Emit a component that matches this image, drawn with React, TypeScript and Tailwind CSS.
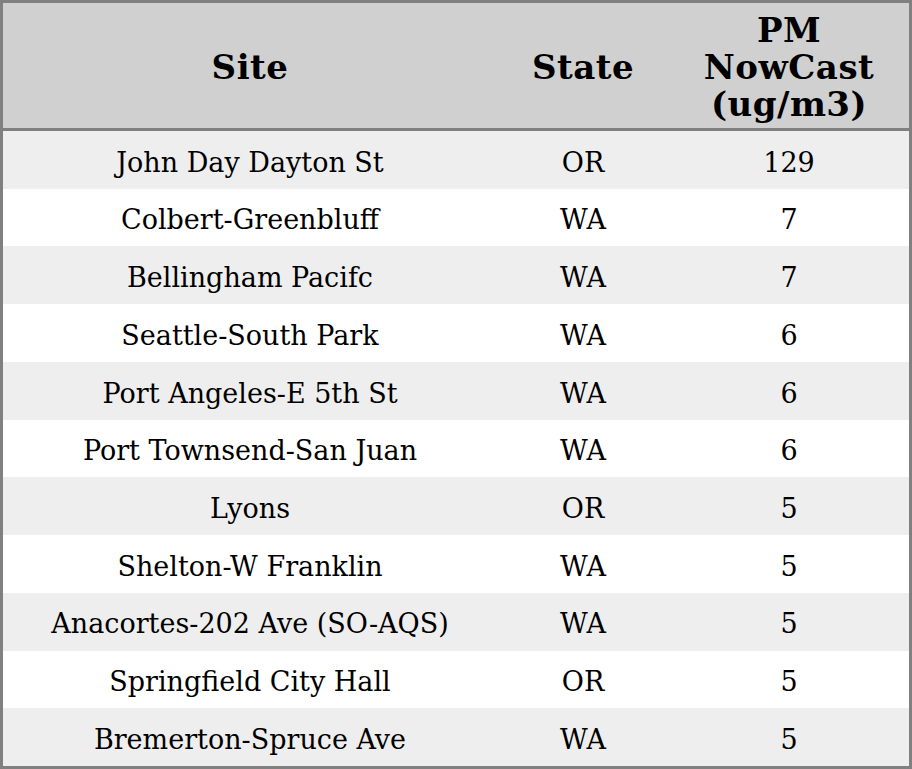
import React from "react";

const rows: [string, string, string][] = [
  ["John Day Dayton St", "OR", "129"],
  ["Colbert-Greenbluff", "WA", "7"],
  ["Bellingham Pacifc", "WA", "7"],
  ["Seattle-South Park", "WA", "6"],
  ["Port Angeles-E 5th St", "WA", "6"],
  ["Port Townsend-San Juan", "WA", "6"],
  ["Lyons", "OR", "5"],
  ["Shelton-W Franklin", "WA", "5"],
  ["Anacortes-202 Ave (SO-AQS)", "WA", "5"],
  ["Springfield City Hall", "OR", "5"],
  ["Bremerton-Spruce Ave", "WA", "5"],
];

export default function App() {
  return (
    <div className="w-[912px] h-[769px] flex flex-col border-[3px] border-[#808080] bg-white text-black font-['DejaVu_Serif',serif]">
      <div className="h-[128px] shrink-0 flex items-center pt-1 bg-[#d0d0d0] border-b-[3px] border-[#808080] font-bold text-[34px] tracking-[0.5px] leading-[37px] text-center">
        <div className="w-[494px]">Site</div>
        <div className="w-[172px]">State</div>
        <div className="flex-1">
          PM
          <br />
          NowCast
          <br />
          (ug/m3)
        </div>
      </div>
      <div className="flex-1 flex flex-col text-[27px]">
        {rows.map((r, i) => (
          <div
            key={r[0]}
            className={
              "flex-1 flex items-center pt-[6px] text-center " +
              (i % 2 === 0 ? "bg-[#eeeeee]" : "bg-white")
            }
          >
            <div className="w-[494px]">{r[0]}</div>
            <div className="w-[172px]">{r[1]}</div>
            <div className="flex-1">{r[2]}</div>
          </div>
        ))}
      </div>
    </div>
  );
}
